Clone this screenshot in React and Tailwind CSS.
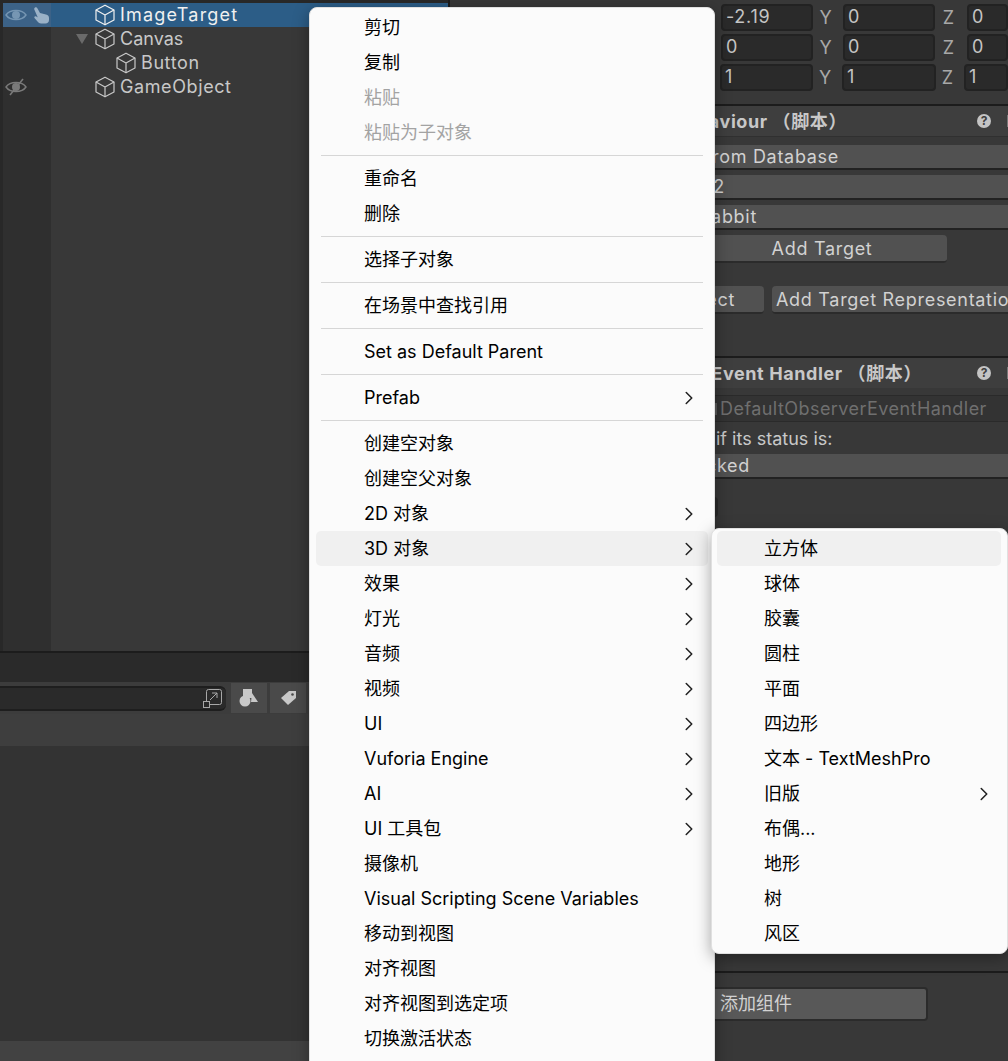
import { ChevronRight } from 'lucide-react';

const latin = "font-['Inter','Noto_Sans_CJK_SC',sans-serif]";

const mainMenu = [
  { label: '剪切' },
  { label: '复制' },
  { label: '粘贴', disabled: true },
  { label: '粘贴为子对象', disabled: true },
  { sep: true },
  { label: '重命名' },
  { label: '删除' },
  { sep: true },
  { label: '选择子对象' },
  { sep: true },
  { label: '在场景中查找引用' },
  { sep: true },
  { label: 'Set as Default Parent' },
  { sep: true },
  { label: 'Prefab', sub: true },
  { sep: true },
  { label: '创建空对象' },
  { label: '创建空父对象' },
  { label: '2D 对象', sub: true },
  { label: '3D 对象', sub: true, active: true },
  { label: '效果', sub: true },
  { label: '灯光', sub: true },
  { label: '音频', sub: true },
  { label: '视频', sub: true },
  { label: 'UI', sub: true },
  { label: 'Vuforia Engine', sub: true },
  { label: 'AI', sub: true },
  { label: 'UI 工具包', sub: true },
  { label: '摄像机' },
  { label: 'Visual Scripting Scene Variables' },
  { label: '移动到视图' },
  { label: '对齐视图' },
  { label: '对齐视图到选定项' },
  { label: '切换激活状态' },
];

const subMenu = [
  { label: '立方体', active: true },
  { label: '球体' },
  { label: '胶囊' },
  { label: '圆柱' },
  { label: '平面' },
  { label: '四边形' },
  { label: '文本 - TextMeshPro' },
  { label: '旧版', sub: true },
  { label: '布偶...' },
  { label: '地形' },
  { label: '树' },
  { label: '风区' },
];

function MenuItem({ item, textPad, inset }) {
  return (
    <div className={`h-[35px] flex items-center justify-between rounded-[5px] text-[18px] ${inset} ${textPad} ${item.active ? 'bg-[#f0f0f0]' : ''} ${item.disabled ? 'text-[#a3a3a3]' : 'text-black'}`}>
      <span className="whitespace-nowrap">{item.label}</span>
      {item.sub && <ChevronRight size={22} strokeWidth={1.7} className="text-[#222]" />}
    </div>
  );
}

// unity's gameobject cube
function Cube({ className = '' }) {
  return (
    <svg width="20" height="22" viewBox="0 0 20 22" fill="none" stroke="currentColor" strokeWidth="1.2" strokeLinejoin="round" className={className}>
      <path d="M10 1.2 19 6v10l-9 4.8L1 16V6z" />
      <path d="M1 6l9 5 9-5M10 11v9.8" />
    </svg>
  );
}

function EyeIcon({ color, off }) {
  return (
    <svg width="22" height="18" viewBox="0 0 22 18" fill="none" stroke={color} strokeWidth="1.4">
      <path d="M1 9C5 3 17 3 21 9 17 15 5 15 1 9z" />
      <circle cx="11" cy="9" r="4" fill={color} stroke="none" />
      {off && <path d="M5 17 18 1" strokeWidth="1.6" />}
    </svg>
  );
}

function VectorRow({ x, y, z, wide }) {
  const field = 'h-[27px] rounded-[4px] bg-[#2a2a2a] border-2 border-[#222222] pl-[3px] leading-[22px] tracking-[0.7px]';
  return (
    <div className={`h-[30px] flex items-center text-[18px] text-[#c4c4c4] ${wide ? '-ml-[1px]' : ''}`}>
      <div className={`${wide ? 'w-[93px]' : 'w-[92px]'} ${field}`}>{x}</div>
      <span className={`${wide ? 'w-[29px]' : 'w-[30px]'} text-center text-[#a8a8a8] pr-[5px]`}>Y</span>
      <div className={`${wide ? 'w-[94px]' : 'w-[92px]'} ${field}`}>{y}</div>
      <span className={`${wide ? 'w-[28px]' : 'w-[32px]'} text-center text-[#a8a8a8] pr-[5px]`}>Z</span>
      <div className={`flex-1 ${field}`}>{z}</div>
    </div>
  );
}

function SectionHeader({ title, end }) {
  return (
    <div className="h-[32px] border-t-2 border-[#1c1c1c] bg-[#3e3e3e] flex items-center text-[18px] font-bold text-[#c8c8c8] tracking-[0.6px]">
      <div className="text-right whitespace-nowrap shrink-0" style={{ width: end }}>{title}</div>
      <div className="ml-auto mr-[17px] w-[14px] h-[14px] rounded-full bg-[#c4c4c4] text-[#3e3e3e] text-[12px] font-bold leading-[14px] text-center tracking-normal">?</div>
      <div className="absolute right-0 w-px h-[12px] bg-[#777777]" />
    </div>
  );
}

function Dropdown({ text, end }) {
  return (
    <div className="h-[25px] bg-[#515151] border-b-2 border-[#222222] flex items-center text-[18px] text-[#d2d2d2] tracking-[0.7px]">
      <div className="text-right whitespace-nowrap shrink-0" style={{ width: end }}>{text}</div>
    </div>
  );
}

export default function App() {
  return (
    <div className={`relative w-[1008px] h-[1061px] overflow-hidden flex bg-[#383838] ${latin}`}>
      {/* Left — hierarchy and project panel */}
      <div className="w-[450px] shrink-0 flex flex-col border-r-2 border-[#1c1c1c]">
        <div className="h-[653px] shrink-0 flex flex-col pl-[3px] border-b-2 border-[#1c1c1c] bg-[#282828]">
          <div className="h-[3px] shrink-0" />
          <div className="h-[24px] shrink-0 flex items-center bg-[#2c5d87] text-[18px] text-[#f0f0f0]">
            <div className="w-[48px] h-full flex items-center gap-[5px] pl-[2px] bg-[#3c6287]">
              <EyeIcon color="#7696b3" />
              <svg width="18" height="18" viewBox="0 0 18 18" fill="#9ab1c7">
                <path d="M3 1.5c1-.5 2 0 2.5 1L8 7l6 1.5c2 .5 3 1.5 3 3.5v2c0 2-1.5 3.5-3.5 3.5H9c-1.5 0-2.5-1-3.5-2L2.5 12c-.5-.8 0-1.8 1-1.8.6 0 1.5.7 2.3 1.3L2.3 3.5C2 2.7 2.3 2 3 1.5z" />
              </svg>
            </div>
            <Cube className="ml-[44px] mr-[5px]" />
            <span className="tracking-[1.2px] mb-[2px]">ImageTarget</span>
          </div>
          <div className="flex-1 flex text-[18px] text-[#c8c8c8] bg-[#383838]">
            <div className="w-[48px] bg-[#2f2f2f] pt-[51px] pl-[2px]">
              <EyeIcon color="#7a7a7a" off />
            </div>
            <div className="flex-1 flex flex-col">
              <div className="h-[24px] flex items-center">
                <div className="ml-[25px] w-0 h-0 border-x-[6px] border-x-transparent border-t-[10px] border-t-[#6a6a6a]" />
                <Cube className="ml-[7px] mr-[5px]" />
                <span className="mb-[2px]">Canvas</span>
              </div>
              <div className="h-[24px] flex items-center pl-[65px]">
                <Cube className="mr-[5px]" />
                <span className="tracking-[0.6px] mb-[2px]">Button</span>
              </div>
              <div className="h-[24px] flex items-center pl-[44px]">
                <Cube className="mr-[5px]" />
                <span className="tracking-[0.6px] mb-[2px]">GameObject</span>
              </div>
            </div>
          </div>
        </div>
        <div className="h-[29px] shrink-0 bg-[#2a2a2a]" />
        <div className="h-[32px] shrink-0 bg-[#3c3c3c] flex items-center">
          <div className="w-[226px] h-[25px] rounded-r-[6px] bg-[#2a2a2a] border-y-2 border-[#1e1e1e] flex justify-end items-center pr-[2px]">
            <svg width="22" height="22" viewBox="0 0 22 22" fill="none" stroke="#a8a8a8" strokeWidth="1">
              <rect x="4.5" y="2.5" width="15" height="15" rx="2" />
              <rect x="1.5" y="14.5" width="6" height="6" fill="#2a2a2a" />
              <path d="M8 13l7-7M10 6h5v5" />
            </svg>
          </div>
          <div className="ml-[5px] w-[36px] h-[30px] bg-[#4a4a4a] flex items-center justify-center">
            <svg width="20" height="20" viewBox="0 0 20 20" fill="#c8c8c8">
              <rect x="4" y="1" width="9" height="9" />
              <path d="M13 5l6 9h-7z" />
              <circle cx="6" cy="13" r="5.5" />
            </svg>
          </div>
          <div className="ml-[3px] w-[36px] h-[30px] bg-[#4a4a4a] flex items-center justify-center">
            <svg width="18" height="18" viewBox="0 0 18 18">
              <path d="M10 2h7v7l-8 7-7-7z" fill="#c8c8c8" />
              <circle cx="13.5" cy="5.5" r="1.3" fill="#4a4a4a" />
            </svg>
          </div>
        </div>
        <div className="h-[32px] shrink-0 bg-[#3e3e3e]" />
        <div className="flex-1 bg-[#333333]" />
        <div className="h-[20px] shrink-0 bg-[#424242]" />
      </div>

      {/* Right — inspector */}
      <div className="flex-1 flex flex-col pt-[2px] pl-[271px] text-[18px]">
        <VectorRow x="-2.19" y="0" z="0" />
        <VectorRow x="0" y="0" z="0" />
        <VectorRow x="1" y="1" z="1" wide />
      </div>
      <div className="absolute left-[450px] right-0 top-[104px] flex flex-col">
        <SectionHeader title="Image Target Behaviour （脚本）" end={397} />
        <div className="h-[9px] border-t border-[#303030]" />
        <Dropdown text="From Database" end={389} />
        <div className="h-[5px]" />
        <Dropdown text="2" end={275} />
        <div className="h-[5px]" />
        <Dropdown text="Rabbit" end={307} />
        <div className="h-[5px]" />
        <div className="w-[497px] h-[28px] rounded-[4px] bg-[#515151] border-b-2 border-[#2b2b2b] text-center text-[18px] text-[#d2d2d2] leading-[28px] pl-[252px] pr-[5px] tracking-[0.7px]">Add Target</div>
        <div className="h-[23px]" />
        <div className="flex gap-[8px] h-[28px] text-[18px] text-[#d2d2d2] tracking-[0.7px]">
          <div className="w-[314px] rounded-[4px] bg-[#515151] border-b-2 border-[#2b2b2b] text-right pr-[29px] leading-[28px]">Select</div>
          <div className="flex-1 rounded-l-[4px] bg-[#515151] border-b-2 border-[#2b2b2b] pl-[4px] leading-[28px] whitespace-nowrap overflow-hidden">Add Target Representation</div>
        </div>
        <div className="h-[42px]" />
        <SectionHeader title="Default Observer Event Handler （脚本）" end={472} />
        <div className="h-[7px]" />
        <div className="h-[27px] bg-[#333333] border-y border-[#2a2a2a] text-[18px] text-[#6f6f6f] pl-[263px] flex items-center gap-[3px] whitespace-nowrap overflow-hidden tracking-[0.45px]">
          <div className="w-[4px] h-[12px] bg-[#5a5a5a] shrink-0" />
          DefaultObserverEventHandler
        </div>
        <div className="h-[32px] text-[18px] text-[#c8c8c8] pl-[266px] flex items-center whitespace-nowrap">if its status is:</div>
        <Dropdown text="Tracked" end={300} />
        <div className="h-[18px]" />
        <div className="w-[268px] h-[20px] rounded-[4px] bg-[#2a2a2a]" />
        <div className="h-[454px]" />
        <div className="h-[2px] bg-[#1c1c1c]" />
        <div className="h-[14px]" />
        <div className="w-[478px] h-[34px] rounded-[4px] bg-[#585858] border-2 border-[#2b2b2b] text-[18px] text-[#d2d2d2] pl-[268px] leading-[30px]">添加组件</div>
      </div>

      {/* Context menu */}
      <div className="absolute left-[309px] top-[7px] w-[406px] h-[1070px] rounded-[8px] bg-[#fbfbfb] border border-[#e0e0e0] shadow-[0_4px_16px_rgba(0,0,0,0.35)] pt-[2px]">
        {mainMenu.map((item, i) =>
          item.sep ? (
            <div key={i} className="h-[11px] flex items-center px-[11px]"><div className="h-px w-full bg-[#d6d6d6]" /></div>
          ) : (
            <MenuItem key={i} item={item} inset="mx-[6px]" textPad="pl-[48px] pr-[8px]" />
          )
        )}
      </div>

      {/* 3D object submenu */}
      <div className="absolute left-[711px] top-[528px] w-[297px] h-[426px] rounded-[8px] bg-[#fbfbfb] border border-[#e0e0e0] shadow-[0_4px_16px_rgba(0,0,0,0.35)] pt-[2px]">
        {subMenu.map((item) => (
          <MenuItem key={item.label} item={item} inset="ml-[5px] mr-[6px]" textPad="pl-[47px] pr-[6px]" />
        ))}
      </div>
    </div>
  );
}
